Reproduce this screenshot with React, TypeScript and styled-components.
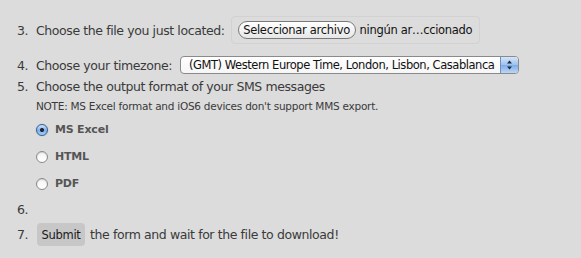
import React from "react";
import styled, { createGlobalStyle } from "styled-components";

const Global = createGlobalStyle`
  html, body { margin: 0; padding: 0; background: #dcdcdc; }
  body { font-family: "DejaVu Sans", Verdana, sans-serif; color: #3a3a3a; }
`;

const Page = styled.div`
  width: 581px;
  height: 258px;
  background: #dcdcdc;
  padding-top: 16px;
  box-sizing: border-box;
`;

const Step = styled.div<{ $h: number }>`
  display: flex;
  align-items: center;
  height: ${(p) => p.$h}px;
  font-size: 12.5px;
  letter-spacing: -0.4px;
`;

const Num = styled.span`
  width: 36px;
  padding-left: 17px;
  box-sizing: border-box;
  flex: none;
`;

const Label = styled.span`
  margin-right: 8px;
`;

const FileBox = styled.div`
  display: flex;
  align-items: center;
  height: 28px;
  width: 249px;
  box-sizing: border-box;
  border: 1px solid #d2d2d2;
  border-radius: 4px;
  padding-left: 6px;
  margin-left: -2px;
`;

const FileButton = styled.span`
  display: inline-flex;
  align-items: center;
  justify-content: center;
  height: 18px;
  width: 118px;
  box-sizing: border-box;
  border: 1px solid #7a7a7a;
  border-radius: 9px;
  background: linear-gradient(#ffffff, #f4f4f4 50%, #e6e6e6);
  font-size: 11.5px;
  letter-spacing: -0.3px;
  color: #111;
`;

const FileName = styled.span`
  margin-left: 4px;
  font-size: 11.5px;
  letter-spacing: -0.3px;
  color: #111;
`;

const Select = styled.div`
  display: flex;
  align-items: stretch;
  width: 339px;
  height: 18px;
  box-sizing: border-box;
  border: 1px solid #8a8a8a;
  border-radius: 4px;
  background: linear-gradient(#ffffff, #f6f6f6);
  overflow: hidden;
  font-size: 11.5px;
  letter-spacing: -0.45px;
  color: #111;
`;

const SelectText = styled.span`
  flex: 1;
  padding-left: 8px;
  display: flex;
  align-items: center;
  white-space: nowrap;
  overflow: hidden;
`;

const Arrow = styled.span`
  width: 17px;
  border-left: 1px solid #6f8fbf;
  background: linear-gradient(#d6e6fb, #9cc0ee 50%, #7eabe6 51%, #bcd6f7);
  display: flex;
  align-items: center;
  justify-content: center;
`;

const Note = styled.div`
  height: 20px;
  display: flex;
  align-items: center;
  padding-left: 36px;
  font-size: 10.5px;
  letter-spacing: -0.25px;
  color: #3a3a3a;
`;

const Option = styled.label`
  height: 27px;
  display: flex;
  align-items: center;
  padding-left: 36px;
  font-size: 11px;
  font-weight: bold;
  color: #555;
  letter-spacing: -0.2px;
`;

const Radio = styled.span<{ $on?: boolean }>`
  width: 12px;
  height: 12px;
  box-sizing: border-box;
  border-radius: 50%;
  margin-right: 7px;
  border: 1px solid ${(p) => (p.$on ? "#38628f" : "#8a8a8a")};
  background: ${(p) =>
    p.$on
      ? "radial-gradient(circle at 50% 50%, #1d2a3a 0 1.8px, transparent 2.3px), linear-gradient(#cfe2fb, #7fb0ec 55%, #a9ccf6)"
      : "linear-gradient(#f4f4f4, #ffffff)"};
  box-shadow: ${(p) => (p.$on ? "0 0 1px #5c8fd6" : "inset 0 1px 1px rgba(0,0,0,0.15)")};
`;

const SubmitButton = styled.span`
  display: inline-flex;
  align-items: center;
  justify-content: center;
  width: 48px;
  height: 23px;
  box-sizing: border-box;
  background: #c7c7c7;
  border-radius: 4px;
  font-size: 11.5px;
  letter-spacing: -0.3px;
  color: #1a1a1a;
  margin-left: 1px;
  margin-right: 5px;
`;

export default function App() {
  return (
    <>
      <Global />
      <Page>
        <Step $h={28}>
          <Num>3.</Num>
          <Label>Choose the file you just located:</Label>
          <FileBox>
            <FileButton>Seleccionar archivo</FileButton>
            <FileName>ningún ar…ccionado</FileName>
          </FileBox>
        </Step>
        <Step $h={10} />
        <Step $h={22}>
          <Num>4.</Num>
          <Label>Choose your timezone:</Label>
          <Select>
            <SelectText>(GMT) Western Europe Time, London, Lisbon, Casablanca</SelectText>
            <Arrow>
              <svg width="7" height="10" viewBox="0 0 7 10">
                <path d="M3.5 0.5 L6 3.5 H1 Z" fill="#1a2a40" />
                <path d="M3.5 9.5 L6 6.5 H1 Z" fill="#1a2a40" />
              </svg>
            </Arrow>
          </Select>
        </Step>
        <Step $h={20}>
          <Num>5.</Num>
          <span>Choose the output format of your SMS messages</span>
        </Step>
        <Note>NOTE: MS Excel format and iOS6 devices don't support MMS export.</Note>
        <Option>
          <Radio $on />
          MS Excel
        </Option>
        <Option>
          <Radio />
          HTML
        </Option>
        <Option>
          <Radio />
          PDF
        </Option>
        <Step $h={25}>
          <Num>6.</Num>
        </Step>
        <Step $h={25}>
          <Num>7.</Num>
          <SubmitButton>Submit</SubmitButton>
          <span>the form and wait for the file to download!</span>
        </Step>
      </Page>
    </>
  );
}
